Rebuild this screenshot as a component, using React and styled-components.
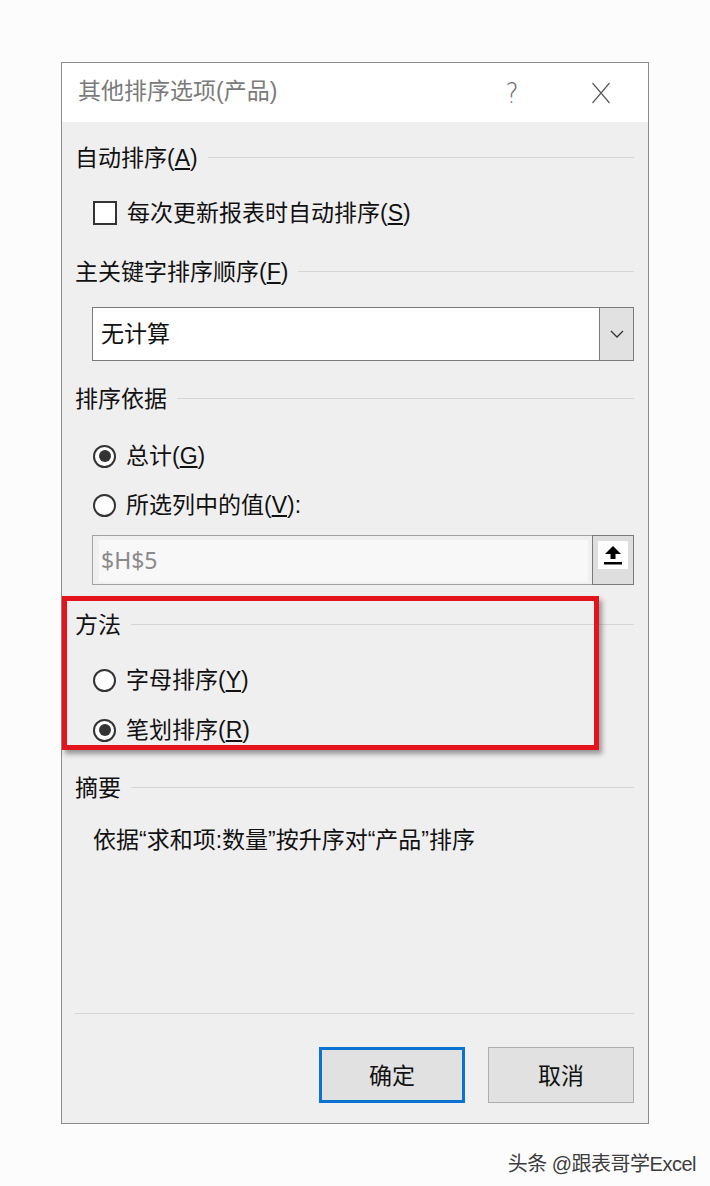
import React from "react";
import styled, { createGlobalStyle } from "styled-components";

const GlobalStyle = createGlobalStyle`
  html, body {
    margin: 0;
    padding: 0;
    background: #fdfcfd;
  }
  body {
    font-family: "Liberation Sans", "Noto Sans CJK SC", sans-serif;
    color: #111;
  }
`;

const Page = styled.div`
  width: 710px;
  height: 1186px;
  box-sizing: border-box;
  padding: 62px 0 0 61px;
  display: flex;
  flex-direction: column;
`;

const Dialog = styled.div`
  width: 588px;
  height: 1062px;
  box-sizing: border-box;
  border: 1px solid #8c8c8c;
  background: #f0eff0;
  display: flex;
  flex-direction: column;
`;

const TitleBar = styled.div`
  height: 59px;
  background: #ffffff;
  display: flex;
  align-items: center;
  padding-left: 16px;
  padding-right: 24px;
`;

const TitleText = styled.div`
  flex: 1;
  font-size: 23px;
  color: #7a7a7a;
  line-height: 1;
  padding-bottom: 3px;
`;

const TitleButton = styled.div`
  width: 46px;
  height: 46px;
  display: flex;
  align-items: center;
  justify-content: center;
  color: #6a6a6a;
  font-size: 29px;
  font-family: "DejaVu Sans", "Liberation Sans", sans-serif;
  font-weight: 200;
  transform: scaleX(0.85);
  margin-left: ${(p) => p.$gap || 0}px;
`;

const Body = styled.div`
  flex: 1;
  display: flex;
  flex-direction: column;
  padding: 18px 14px 20px 13px;
`;

const SectionHeader = styled.div`
  height: 36px;
  display: flex;
  align-items: center;
  gap: 10px;
  font-size: 23px;
  margin-top: ${(p) => p.$mt || 0}px;
  & > span {
    padding-bottom: 4px;
  }
  &::after {
    content: "";
    flex: 1;
    height: 1px;
    background: #d6d5d6;
    margin-top: -2px;
  }
`;

const OptionRow = styled.label`
  height: 36px;
  display: flex;
  align-items: center;
  gap: 10px;
  margin-left: 18px;
  margin-top: ${(p) => p.$mt || 0}px;
  font-size: 23px;
  & > span:last-child {
    padding-bottom: 4px;
  }
`;

const CheckBox = styled.span`
  width: 24px;
  height: 24px;
  box-sizing: border-box;
  border: 2px solid #333;
  background: #fff;
`;

const Radio = styled.span`
  width: 23px;
  height: 23px;
  box-sizing: border-box;
  border: 2px solid #333;
  border-radius: 50%;
  background: #fff;
  display: flex;
  align-items: center;
  justify-content: center;
  &::after {
    content: "";
    width: 12px;
    height: 12px;
    border-radius: 50%;
    background: ${(p) => (p.$checked ? "#333" : "transparent")};
  }
`;

const Select = styled.div`
  height: 54px;
  box-sizing: border-box;
  margin-left: 17px;
  margin-top: ${(p) => p.$mt || 0}px;
  border: 1px solid #7a7a7a;
  background: #fff;
  display: flex;
`;

const SelectValue = styled.div`
  flex: 1;
  display: flex;
  align-items: center;
  padding-left: 8px;
  padding-bottom: 4px;
  font-size: 23px;
`;

const SelectArrow = styled.div`
  width: 33px;
  background: #e1e1e1;
  border-left: 1px solid #7a7a7a;
  display: flex;
  align-items: center;
  justify-content: center;
`;

const RefInput = styled.div`
  height: 50px;
  margin-left: 17px;
  margin-top: ${(p) => p.$mt || 0}px;
  display: flex;
`;

const RefField = styled.div`
  flex: 1;
  box-sizing: border-box;
  border: 1px solid #a3a3a3;
  border-right: none;
  background: #f0f0f0;
  padding: 4px 4px 2px 6px;
  display: flex;
`;

const RefText = styled.div`
  flex: 1;
  background: #f8f8f8;
  display: flex;
  align-items: center;
  padding-left: 2px;
  padding-bottom: 3px;
  font-size: 23px;
  color: #8a8a8a;
  font-family: "Noto Sans", "Liberation Sans", sans-serif;
`;

const RefButton = styled.div`
  width: 42px;
  box-sizing: border-box;
  border: 1px solid #7a7a7a;
  background: #dedede;
  display: flex;
  align-items: flex-start;
  justify-content: center;
  padding-top: 5px;
`;

const IconTile = styled.div`
  width: 30px;
  height: 28px;
  background: #fff;
  display: flex;
  align-items: center;
  justify-content: center;
`;

const Group = styled.div`
  position: relative;
  margin-top: ${(p) => p.$mt || 0}px;
  display: flex;
  flex-direction: column;
`;

const RedFrame = styled.div`
  position: absolute;
  top: -11px;
  left: -13px;
  width: 537px;
  height: 154px;
  box-sizing: border-box;
  border: 5px solid #e3141b;
  box-shadow: 3px 4px 5px rgba(40, 40, 40, 0.45);
  pointer-events: none;
`;

const Summary = styled.div`
  height: 36px;
  display: flex;
  align-items: center;
  margin-left: 18px;
  margin-top: ${(p) => p.$mt || 0}px;
  padding-bottom: 4px;
  box-sizing: border-box;
  font-size: 23px;
`;

const Separator = styled.div`
  margin-top: auto;
  height: 1px;
  background: #d6d5d6;
`;

const ButtonRow = styled.div`
  display: flex;
  justify-content: flex-end;
  gap: 23px;
  margin-top: 33px;
`;

const DialogButton = styled.div`
  width: 146px;
  height: 56px;
  box-sizing: border-box;
  background: #e1e1e1;
  border: ${(p) => (p.$primary ? "3px solid #0a73d2" : "1px solid #adadad")};
  display: flex;
  align-items: center;
  justify-content: center;
  padding-bottom: 3px;
  font-size: 23px;
`;

const Watermark = styled.div`
  display: flex;
  justify-content: flex-end;
  padding-right: 14px;
  margin-top: 24px;
  font-size: 20px;
  color: #3c3c3c;
  text-shadow: 1px 1px 0 #fff, -1px -1px 0 #fff;
  letter-spacing: -0.5px;
`;

function ChevronDown() {
  return (
    <svg width="14" height="8" viewBox="0 0 14 8">
      <path d="M1 1 L7 7 L13 1" fill="none" stroke="#333" strokeWidth="1.3" />
    </svg>
  );
}

function UploadIcon() {
  return (
    <svg width="20" height="20" viewBox="0 0 20 20">
      <path d="M10 1 L18 9 L12.5 9 L12.5 14 L7.5 14 L7.5 9 L2 9 Z" fill="#000" />
      <rect x="1" y="17" width="18" height="2.5" fill="#000" />
    </svg>
  );
}

function CloseIcon() {
  return (
    <svg width="22" height="22" viewBox="0 0 22 22">
      <path d="M1 1 L21 21 M21 1 L1 21" stroke="#555" strokeWidth="1.4" fill="none" />
    </svg>
  );
}

export default function App() {
  return (
    <>
      <GlobalStyle />
      <Page>
        <Dialog>
          <TitleBar>
            <TitleText>其他排序选项(产品)</TitleText>
            <TitleButton>?</TitleButton>
            <TitleButton $gap={43}>
              <CloseIcon />
            </TitleButton>
          </TitleBar>
          <Body>
            <SectionHeader>
              <span>
                自动排序(<u>A</u>)
              </span>
            </SectionHeader>
            <OptionRow $mt={19}>
              <CheckBox />
              <span>
                每次更新报表时自动排序(<u>S</u>)
              </span>
            </OptionRow>

            <SectionHeader $mt={23}>
              <span>
                主关键字排序顺序(<u>F</u>)
              </span>
            </SectionHeader>
            <Select $mt={17}>
              <SelectValue>无计算</SelectValue>
              <SelectArrow>
                <ChevronDown />
              </SelectArrow>
            </Select>

            <SectionHeader $mt={20}>
              <span>排序依据</span>
            </SectionHeader>
            <OptionRow $mt={21}>
              <Radio $checked />
              <span>
                总计(<u>G</u>)
              </span>
            </OptionRow>
            <OptionRow $mt={13}>
              <Radio />
              <span>
                所选列中的值(<u>V</u>):
              </span>
            </OptionRow>
            <RefInput $mt={12}>
              <RefField>
                <RefText>$H$5</RefText>
              </RefField>
              <RefButton>
                <IconTile>
                  <UploadIcon />
                </IconTile>
              </RefButton>
            </RefInput>

            <Group $mt={22}>
              <SectionHeader>
                <span>方法</span>
              </SectionHeader>
              <OptionRow $mt={19}>
                <Radio />
                <span>
                  字母排序(<u>Y</u>)
                </span>
              </OptionRow>
              <OptionRow $mt={14}>
                <Radio $checked />
                <span>
                  笔划排序(<u>R</u>)
                </span>
              </OptionRow>
              <RedFrame />
            </Group>

            <SectionHeader $mt={22}>
              <span>摘要</span>
            </SectionHeader>
            <Summary $mt={16}>依据“求和项:数量”按升序对“产品”排序</Summary>

            <Separator />
            <ButtonRow>
              <DialogButton $primary>确定</DialogButton>
              <DialogButton>取消</DialogButton>
            </ButtonRow>
          </Body>
        </Dialog>
        <Watermark>头条 @跟表哥学Excel</Watermark>
      </Page>
    </>
  );
}
